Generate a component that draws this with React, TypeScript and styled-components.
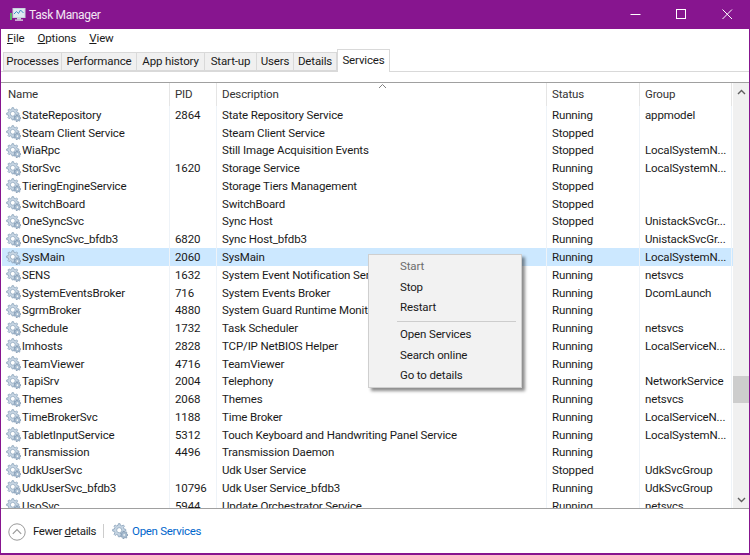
import React from "react";
import styled, { createGlobalStyle } from "styled-components";

const Global = createGlobalStyle`
  html, body { margin: 0; padding: 0; background: #fff; }
  body { font-family: Roboto, "Open Sans", "Liberation Sans", sans-serif; font-size: 11.5px; letter-spacing: -0.14px; color: #1a1a1a; }
  * { box-sizing: border-box; }
`;

const Win = styled.div`
  position: relative;
  width: 750px; height: 555px;
  display: flex; flex-direction: column;
  border-left: 1px solid #87158f; border-right: 1px solid #87158f; border-bottom: 2px solid #87158f;
  overflow: hidden;
`;
const TitleBar = styled.header`
  height: 29px; margin: 0 -1px; flex: none;
  background: #87158f; color: #fff;
  display: flex; align-items: center; padding-left: 9px; gap: 3px;
  font-size: 12px; letter-spacing: -0.35px;
`;
const TitleText = styled.span` flex: 1; color: #f3e6f4; `;
const WinBtn = styled.button`
  width: 43px; height: 29px; padding: 0; border: 0; background: none;
  display: flex; align-items: center; justify-content: center;
  position: relative; left: -1px;
`;
const MenuBar = styled.nav`
  height: 18px; flex: none; display: flex; gap: 13px; padding-left: 6px; align-items: center;
`;
const MenuItem = styled.span` white-space: nowrap; `;
const TabStrip = styled.div`
  height: 25px; flex: none; display: flex; align-items: flex-end; padding-left: 2px;
  border-bottom: 1px solid #d9d9d9;
`;
const Tab = styled.div<{ $w: number; $active?: boolean }>`
  width: ${p => p.$w}px;
  height: ${p => (p.$active ? 23 : 19)}px;
  margin-bottom: ${p => (p.$active ? -1 : 0)}px;
  padding: ${p => (p.$active ? "0 0 3px" : "0 0 1px")};
  display: flex; align-items: center; justify-content: center;
  background: ${p => (p.$active ? "#fff" : "#f0f0f0")};
  border: 1px solid #d9d9d9;
  border-bottom: ${p => (p.$active ? "0" : "1px solid #d9d9d9")};
  border-left: ${p => (p.$active ? "1px solid #d9d9d9" : "0")};
  white-space: nowrap;
  &:first-child { border-left: 1px solid #d9d9d9; }
`;
const Spacer = styled.div` height: 11px; flex: none; border-bottom: 1px solid #a0a0a0; `;
const Main = styled.div` flex: 1; min-height: 0; display: flex; border-bottom: 1px solid #a0a0a0; `;
const List = styled.div` flex: 1; min-width: 0; overflow: hidden; position: relative; padding-left: 1px; `;
const Grid = styled.div<{ $h: number; $bg?: string }>`
  height: ${p => p.$h}px;
  display: grid; grid-template-columns: 168px 47px 330px 93px 92px;
  background: ${p => p.$bg || "transparent"};
`;
const HeadCell = styled.div`
  display: flex; align-items: center; padding-left: 5px; padding-bottom: 1px; border-right: 1px solid #e5e5e5;
  color: #333; position: relative;
  &:first-child { padding-left: 6px; }
`;
const SortMark = styled.svg` position: absolute; left: 161px; top: 0; `;
const Cell = styled.div`
  display: flex; align-items: center; padding-left: 5px; min-width: 0; white-space: nowrap; overflow: hidden;
  border-right: 1px solid #eef3f8;
`;
const NameCell = styled(Cell)` padding-left: 4px; gap: 1px; `;
const Scroll = styled.div`
  width: 16px; flex: none; background: #f0f0f0; display: flex; flex-direction: column; align-items: center;
`;
const ScrollArrow = styled.svg<{ $down?: boolean }>` flex: none; margin: 6px 0 ${p => (p.$down ? 5 : 6)}px; `;
const Track = styled.div` flex: 1; width: 100%; padding-top: 275px; `;
const Thumb = styled.div` height: 27px; background: #cdcdcd; `;
const Footer = styled.footer`
  height: 44px; flex: none; display: flex; align-items: center; padding-left: 7px;
`;
const Chevron = styled.svg` flex: none; margin-top: 1px; `;
const Fewer = styled.span` margin-left: 7px; white-space: nowrap; letter-spacing: -0.38px; `;
const Divider = styled.span` width: 1px; height: 14px; background: #ccc; margin: 0 8px 0 7px; `;
const Link = styled.span` color: #0066cc; margin-left: 4px; white-space: nowrap; letter-spacing: -0.3px; `;
const Context = styled.div`
  position: absolute; left: 367px; top: 254px; width: 154px; height: 134px;
  background: #f2f2f2; border: 1px solid #cfcfcf;
  box-shadow: 3px 3px 3px rgba(0,0,0,.45);
  padding-top: 1px;
  z-index: 5;
`;
const CtxItem = styled.div<{ $off?: boolean }>`
  height: 20.6px; display: flex; align-items: center; padding-left: 31px;
  color: ${p => (p.$off ? "#6d6d6d" : "#1a1a1a")};
`;
const CtxSep = styled.div` height: 1px; background: #cdcdcd; margin: 3px 5px 2px 28px; `;

const gearPath = (cx: number, cy: number, R: number, r: number, teeth: number) => {
  const pts: string[] = [];
  const step = (Math.PI * 2) / teeth;
  for (let i = 0; i < teeth; i++) {
    const a = i * step;
    ([[-0.3, r], [-0.16, R], [0.16, R], [0.3, r]] as [number, number][]).forEach(([o, rad]) => {
      const t = a + o * step;
      pts.push(`${(cx + rad * Math.cos(t)).toFixed(2)} ${(cy + rad * Math.sin(t)).toFixed(2)}`);
    });
  }
  return "M" + pts.join("L") + "Z";
};
const bigGear = gearPath(7, 7, 6.4, 4.9, 8);
const smallGear = gearPath(11.8, 11.6, 3.6, 2.7, 7);

const Gear = ({ size = 15 }: { size?: number }) => (
  <svg width={size} height={size} viewBox="0 0 15.5 15.5" style={{ flex: "none" }}>
    <path d={bigGear} fill="#c6d5e3" stroke="#8aa3bb" strokeWidth=".8" />
    <circle cx="7" cy="7" r="2.5" fill="#fff" stroke="#8fa7be" strokeWidth=".8" />
    <path d={smallGear} fill="#a9bed2" stroke="#7690aa" strokeWidth=".7" />
    <circle cx="11.8" cy="11.6" r="1.2" fill="#fff" stroke="#8fa7be" strokeWidth=".5" />
  </svg>
);

const rows: [string, string, string, string, string][] = [
  ["StateRepository", "2864", "State Repository Service", "Running", "appmodel"],
  ["Steam Client Service", "", "Steam Client Service", "Stopped", ""],
  ["WiaRpc", "", "Still Image Acquisition Events", "Stopped", "LocalSystemN..."],
  ["StorSvc", "1620", "Storage Service", "Running", "LocalSystemN..."],
  ["TieringEngineService", "", "Storage Tiers Management", "Stopped", ""],
  ["SwitchBoard", "", "SwitchBoard", "Stopped", ""],
  ["OneSyncSvc", "", "Sync Host", "Stopped", "UnistackSvcGr..."],
  ["OneSyncSvc_bfdb3", "6820", "Sync Host_bfdb3", "Running", "UnistackSvcGr..."],
  ["SysMain", "2060", "SysMain", "Running", "LocalSystemN..."],
  ["SENS", "1632", "System Event Notification Service", "Running", "netsvcs"],
  ["SystemEventsBroker", "716", "System Events Broker", "Running", "DcomLaunch"],
  ["SgrmBroker", "4880", "System Guard Runtime Monitor Broker", "Running", ""],
  ["Schedule", "1732", "Task Scheduler", "Running", "netsvcs"],
  ["lmhosts", "2828", "TCP/IP NetBIOS Helper", "Running", "LocalServiceN..."],
  ["TeamViewer", "4716", "TeamViewer", "Running", ""],
  ["TapiSrv", "2004", "Telephony", "Running", "NetworkService"],
  ["Themes", "2068", "Themes", "Running", "netsvcs"],
  ["TimeBrokerSvc", "1188", "Time Broker", "Running", "LocalServiceN..."],
  ["TabletInputService", "5312", "Touch Keyboard and Handwriting Panel Service", "Running", "LocalSystemN..."],
  ["Transmission", "4496", "Transmission Daemon", "Running", ""],
  ["UdkUserSvc", "", "Udk User Service", "Stopped", "UdkSvcGroup"],
  ["UdkUserSvc_bfdb3", "10796", "Udk User Service_bfdb3", "Running", "UdkSvcGroup"],
  ["UsoSvc", "5944", "Update Orchestrator Service", "Running", "netsvcs"],
];
const tabs: [string, number][] = [
  ["Processes", 59], ["Performance", 75], ["App history", 68], ["Start-up", 52], ["Users", 37], ["Details", 43],
];

export default function App() {
  return (
    <>
      <Global />
      <Win>
        <TitleBar>
          <svg width="17" height="15" viewBox="0 0 17 15" style={{ flex: "none" }}>
            <rect x="1" y="6" width="2" height="7" fill="#58b368" />
            <rect x="4" y="1.5" width="12" height="9" fill="#dfeaf2" stroke="#c7d3dc" />
            <path d="M5 7l2.5-2.5 2 2 2-3.5 3 3" fill="none" stroke="#3f8fc4" strokeWidth="1" />
            <rect x="8" y="10.5" width="4" height="2" fill="#c9d3db" />
            <rect x="6" y="12.5" width="8" height="1.2" fill="#e8edf1" />
          </svg>
          <TitleText>Task Manager</TitleText>
          <WinBtn aria-label="Minimise"><svg width="11" height="11"><path d="M0.5 5.5H10.5" stroke="#fff" /></svg></WinBtn>
          <WinBtn aria-label="Maximise"><svg width="11" height="11"><rect x=".5" y=".5" width="9" height="9" fill="none" stroke="#fff" /></svg></WinBtn>
          <WinBtn aria-label="Close"><svg width="11" height="11"><path d="M.5.5l9.5 9.5M10 .5L.5 10" stroke="#fff" fill="none" /></svg></WinBtn>
        </TitleBar>
        <MenuBar>
          <MenuItem><u>F</u>ile</MenuItem>
          <MenuItem><u>O</u>ptions</MenuItem>
          <MenuItem><u>V</u>iew</MenuItem>
        </MenuBar>
        <TabStrip>
          {tabs.map(([t, w]) => <Tab key={t} $w={w}>{t}</Tab>)}
          <Tab $w={53} $active>Services</Tab>
        </TabStrip>
        <Spacer />
        <Main>
          <List>
            <Grid $h={23}>
              <HeadCell>Name</HeadCell>
              <HeadCell>PID</HeadCell>
              <HeadCell>
                Description
                <SortMark width="9" height="6" viewBox="0 0 9 6"><path d="M1 5l3.5-3.5L8 5" fill="none" stroke="#808080" /></SortMark>
              </HeadCell>
              <HeadCell>Status</HeadCell>
              <HeadCell>Group</HeadCell>
            </Grid>
            {rows.map(r => (
              <Grid key={r[0]} $h={17.77} $bg={r[0] === "SysMain" ? "#cce8ff" : undefined}>
                <NameCell><Gear />{r[0]}</NameCell>
                <Cell>{r[1]}</Cell>
                <Cell>{r[2]}</Cell>
                <Cell>{r[3]}</Cell>
                <Cell>{r[4]}</Cell>
              </Grid>
            ))}
          </List>
          <Scroll>
            <ScrollArrow width="9" height="6" viewBox="0 0 9 6"><path d="M1 5l3.5-3.5L8 5" fill="none" stroke="#606060" strokeWidth="1.4" /></ScrollArrow>
            <Track><Thumb /></Track>
            <ScrollArrow $down width="9" height="6" viewBox="0 0 9 6"><path d="M1 1l3.5 3.5L8 1" fill="none" stroke="#606060" strokeWidth="1.4" /></ScrollArrow>
          </Scroll>
        </Main>
        <Footer>
          <Chevron width="18" height="18" viewBox="0 0 18 18">
            <circle cx="9" cy="9" r="8.2" fill="#fff" stroke="#9a9a9a" />
            <path d="M4.8 10.8L9 6.6l4.2 4.2" fill="none" stroke="#9a9a9a" strokeWidth="1.2" />
          </Chevron>
          <Fewer>Fewer <u>d</u>etails</Fewer>
          <Divider />
          <Gear size={16} />
          <Link>Open Services</Link>
        </Footer>
        <Context>
          <CtxItem $off>Start</CtxItem>
          <CtxItem>Stop</CtxItem>
          <CtxItem>Restart</CtxItem>
          <CtxSep />
          <CtxItem>Open Services</CtxItem>
          <CtxItem>Search online</CtxItem>
          <CtxItem>Go to details</CtxItem>
        </Context>
      </Win>
    </>
  );
}
